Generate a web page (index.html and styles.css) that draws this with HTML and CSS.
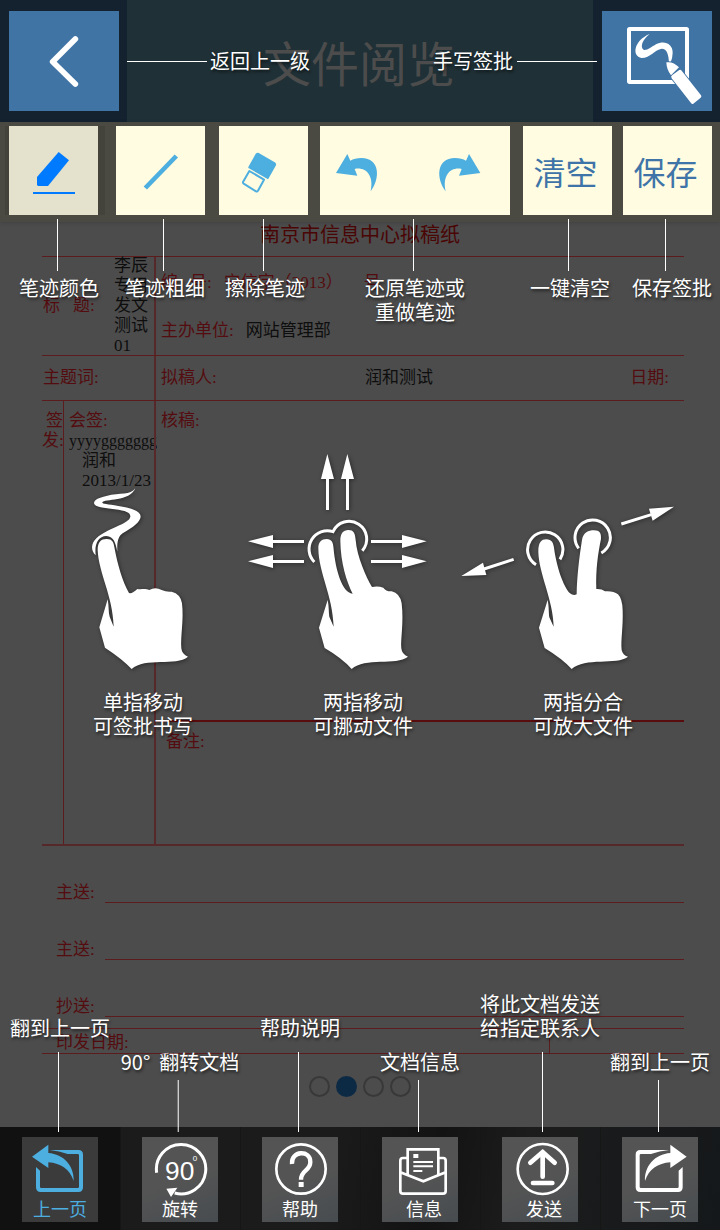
FILE: index.html
```html
<!DOCTYPE html>
<html lang="zh-CN">
<head>
<meta charset="utf-8">
<meta name="viewport" content="width=device-width, initial-scale=1">
<title>文件阅览</title>
<link rel="stylesheet" href="styles.css">
</head>
<body>
<header class="header">
  <div class="header-side">
    <button class="header-button" aria-label="返回上一级">
      <svg viewBox="27 33 330 300"><path d="M226 117L158 185L226 252" fill="none" stroke="#fff" stroke-width="17" stroke-linecap="round" stroke-linejoin="round"/></svg>
    </button>
  </div>
  <div class="header-main">
    <h1 class="header-title">文件阅览</h1>
    <div class="header-tips">
      <div class="header-tip"><span class="lead-h"></span><span class="hint">返回上一级</span></div>
      <div class="header-tip header-tip-end"><span class="hint">手写签批</span><span class="lead-h"></span></div>
    </div>
  </div>
  <div class="header-side">
    <button class="header-button" aria-label="手写签批">
      <svg viewBox="726 33 330 300">
        <rect x="807" y="87" width="174" height="159" rx="2" fill="none" stroke="#fff" stroke-width="12"/>
        <path d="M869 102C849 118 843 134 847 145C853 159 872 142 888 133C914 120 938 132 938 158Q938 174 931 190L927 189C926 164 921 146 905 146C885 149 871 173 845 174C815 170 820 122 869 102Z" fill="#fff"/>
        <path d="M919 187Q940 184 957 202L933 226Q920 210 919 187ZM937 225L958 210Q962 208 965 212L1023 286Q1026 290 1022 293L1000 311Q996 313 993 309L935 235Q931 229 937 225Z" fill="#fff" stroke="#4074a5" stroke-width="5" paint-order="stroke"/>
      </svg>
    </button>
  </div>
</header>

<nav class="toolbar">
  <div class="tool tool-active tool-color">
    <button class="tool-button" aria-label="笔迹颜色"><svg viewBox="27 33 267 267" fill="#007bff"><path d="M176 111L207 136L144 213H114L111 210V186Z"/><path d="M99 231H225V237H99Z"/></svg></button>
    <div class="tool-tip"><span class="hint">笔迹颜色</span></div>
  </div>
  <div class="tool tool-width">
    <button class="tool-button" aria-label="笔迹粗细"><svg viewBox="348 33 267 267"><path d="M436 219L529 123" stroke="#4daee0" stroke-width="14"/></svg></button>
    <div class="tool-tip"><span class="hint">笔迹粗细</span></div>
  </div>
  <div class="tool tool-erase">
    <button class="tool-button" aria-label="擦除笔迹"><svg viewBox="657 33 267 267"><path d="M776 117L824 145Q826 147 825 150L803 189L748 157L769 119Q772 115 776 117Z" fill="#4daee0" stroke="#4daee0" stroke-width="6" stroke-linejoin="round"/><path d="M748 168L729 201Q728 204 731 206L768 229Q772 231 774 227L792 194Z" fill="none" stroke="#4daee0" stroke-width="6" stroke-linejoin="round"/></svg></button>
    <div class="tool-tip"><span class="hint">擦除笔迹</span></div>
  </div>
  <div class="tool tool-history">
    <button class="tool-button" aria-label="还原笔迹"><svg viewBox="960 33 285 267"><path transform="translate(1369 0) scale(-1 1)" d="M327 117L361 174L297 182L305 162C273 155 246 180 257 229C228 190 228 130 285 129Q305 129 318 137Z" fill="#4daee0"/></svg></button>
    <button class="tool-button" aria-label="重做笔迹"><svg viewBox="165 33 285 267"><path d="M327 117L361 174L297 182L305 162C273 155 246 180 257 229C228 190 228 130 285 129Q305 129 318 137Z" fill="#4daee0"/></svg></button>
    <div class="tool-tip"><span class="hint">还原笔迹或<br>重做笔迹</span></div>
  </div>
  <div class="tool tool-clear">
    <button class="tool-button tool-text">清空</button>
    <div class="tool-tip"><span class="hint">一键清空</span></div>
  </div>
  <div class="tool tool-save">
    <button class="tool-button tool-text">保存</button>
    <div class="tool-tip"><span class="hint">保存签批</span></div>
  </div>
</nav>

<main class="viewer">
  <article class="paper">
    <h2 class="paper-title">南京市信息中心拟稿纸</h2>
    <div class="form-row form-subject">
      <div class="cell subject-cell"><span class="subject-label"><span>标</span><span>题:</span></span><span class="ink subject-value">李辰专用发文测试01</span></div>
      <div class="cell number-cell">
        <div class="number-line"><span>编</span><span>号:</span><span>宁信字（2013）</span><span class="number-end">号</span></div>
        <div class="unit-line"><span>主办单位:</span><span class="ink">网站管理部</span></div>
      </div>
    </div>
    <div class="form-row form-author">
      <div class="cell topic-cell">主题词:</div>
      <div class="cell author-cell"><span>拟稿人:</span><span class="ink author-name">润和测试</span><span class="author-date">日期:</span></div>
    </div>
    <div class="form-row form-sign">
      <div class="cell sign-cell"><span class="issue">签<br>发:</span><div class="countersign"><span>会签:</span><span class="ink countersign-id">yyyyggggggg</span><span class="ink countersign-by">润和<br>2013/1/23</span></div></div>
      <div class="cell review-cell"><div class="review">核稿:</div><div class="remark">备注:</div></div>
    </div>
    <div class="send-row"><span>主送:</span><span class="send-line"></span></div>
    <div class="send-row"><span>主送:</span><span class="send-line"></span></div>
    <div class="send-row"><span>抄送:</span><span class="send-line"></span></div>
    <div class="print-row"><span class="print-date">印发日期:</span><span></span></div>
  </article>
  <div class="pages"><span class="page-dot"></span><span class="page-dot page-dot-current"></span><span class="page-dot"></span><span class="page-dot"></span></div>

  <div class="gestures">
    <figure class="gesture">
      <svg class="gesture-art" viewBox="0 0 220 220"><g transform="translate(37 30) scale(.3333)" fill="#fff">
        <path d="M196 25C181 47 151 37 109 48C85 53 72 60 72 70C74 82 103 84 134 88C169 92 182 99 181 110C178 132 110 145 80 174C62 190 62 212 77 226C73 192 84 169 109 168C132 169 137 190 142 215C141 189 143 170 158 160C190 142 212 125 212 109C210 91 181 84 145 78C112 72 97 73 97 67C102 56 180 66 196 25Z"/>
        <path d="M131 440C128 345 86 280 83 210C83 186 93 177 110 177C128 177 131 187 134 206C142 250 157 303 177 339Q187 342 202 327C215 329 225 325 238 330Q256 320 275 330Q290 337 305 335Q332 342 336 370C342 420 331 470 334 505Q336 524 354 530C318 560 225 530 185 567Q157 537 105 503L88 442L113 358C117 380 115 398 119 410Z"/>
      </g></svg>
      <figcaption class="hint">单指移动<br>可签批书写</figcaption>
    </figure>
    <figure class="gesture">
      <svg class="gesture-art" viewBox="0 0 220 220"><g transform="translate(-13 -10) scale(.3333)" fill="#fff">
        <path d="M262 42L282 117H267V210H258V117H243ZM322 42L342 117H327V210H318V117H303Z"/>
        <path d="M24 304L99 285V300H192V309H99V324ZM24 364L99 345V360H192V369H99V384Z"/>
        <path d="M560 304L486 285V300H393V309H486V324ZM560 364L486 345V360H393V369H486V384Z"/>
        <path d="M223 366A55 55 0 0 1 279 275A53 53 0 1 1 367 332" fill="none" stroke="#fff" stroke-width="9"/>
        <path d="M281 560C278 465 236 400 235 325C235 305 245 297 260 297C275 297 280 307 281 328C286 385 306 460 338 461C320 425 302 370 301 302C301 280 310 270 325 270C342 270 345 280 347 300C351 350 378 410 396 441Q415 438 430 443Q438 455 455 454Q480 460 485 490C492 550 481 600 484 625Q486 644 504 650C468 678 375 650 335 687Q307 655 254 624L237 563L263 480C267 500 266 518 268 530Z"/>
      </g></svg>
      <figcaption class="hint">两指移动<br>可挪动文件</figcaption>
    </figure>
    <figure class="gesture">
      <svg class="gesture-art" viewBox="0 0 220 220"><g transform="translate(-33 40) scale(.3333)" fill="#fff">
        <path d="M64 258L129 218L139 255ZM702 50L627 56L638 92Z"/>
        <path d="M132 237L221 208M544 102L634 74M288 224A53 53 0 1 1 360 208M416 175A53 53 0 1 1 484 189" fill="none" stroke="#fff" stroke-width="9"/>
        <path d="M341 410C340 330 296 250 295 185C295 157 304 148 319 148C335 148 341 158 343 180C350 230 370 290 390 310Q400 318 410 313C411 260 418 200 426 150C430 127 445 121 462 121C480 121 484 130 483 147C474 190 467 240 469 297Q485 296 495 304Q520 302 534 313Q547 326 548 360C550 410 542 450 545 480Q548 495 564 500C530 527 435 500 395 537Q368 507 314 474L297 413L323 330C327 350 326 370 328 382Z"/>
      </g></svg>
      <figcaption class="hint">两指分合<br>可放大文件</figcaption>
    </figure>
  </div>
</main>

<footer class="footer">
  <div class="action action-prev">
    <button class="action-button"><svg viewBox="63 471 228 180"><path d="M93 530L142 494V519C188 522 220 558 218 603C206 567 180 550 142 547V564ZM146 510H232V522H200Q175 513 146 510ZM105 561L117 572V620Q117 624 121 624H230Q234 624 234 620V526Q234 522 230 522H210V510H232Q246 510 246 524V622Q246 636 232 636H119Q105 636 105 622Z" fill="#4daee0"/></svg><span>上一页</span></button>
    <div class="action-tip action-tip-tall"><span class="hint">翻到上一页</span></div>
  </div>
  <div class="action">
    <button class="action-button"><svg viewBox="426 471 228 180"><path d="M470 578A74 74 0 1 1 524 639" fill="none" stroke="#fff" stroke-width="9"/><path d="M499 626L532 623L513 651Z" fill="#fff"/><text class="rotate-number" x="495" y="599">90</text><text class="rotate-degree" x="578" y="543">0</text></svg><span>旋转</span></button>
    <div class="action-tip"><span class="hint">90°&nbsp; 翻转文档</span></div>
  </div>
  <div class="action">
    <button class="action-button"><svg viewBox="783 471 228 180"><circle cx="900" cy="567" r="74" fill="none" stroke="#fff" stroke-width="8"/><path d="M873 552C869 511 929 509 928 546C928 574 900 568 900 599" fill="none" stroke="#fff" stroke-width="13"/><path d="M893 606H908V621H893Z" fill="#fff"/></svg><span>帮助</span></button>
    <div class="action-tip action-tip-tall"><span class="hint">帮助说明</span></div>
  </div>
  <div class="action action-wide-icon">
    <button class="action-button"><svg viewBox="66 471 228 180"><path d="M139 534H129Q121 534 121 542V633Q121 641 129 641H249Q257 641 257 633V542Q257 534 249 534H238M121 577L190 604L257 577M143 583V508H235V583" fill="none" stroke="#fff" stroke-width="8"/><path d="M160 522H175V534H160ZM160 543H219V549H160ZM160 556H219V562H160ZM160 570H187V576H160Z" fill="#fff"/></svg><span>信息</span></button>
    <div class="action-tip"><span class="hint">文档信息</span></div>
  </div>
  <div class="action action-wide-icon action-send">
    <button class="action-button"><svg viewBox="429 471 228 180"><circle cx="551" cy="567" r="75" fill="none" stroke="#fff" stroke-width="8"/><path d="M551 590V516M514 548L551 516L587 548M522 609H580" fill="none" stroke="#fff" stroke-width="14" stroke-linecap="round"/></svg><span>发送</span></button>
    <div class="action-tip action-tip-tall"><span class="hint">将此文档发送<br>给指定联系人</span></div>
  </div>
  <div class="action">
    <button class="action-button"><svg viewBox="786 471 228 180"><path transform="translate(1073 0) scale(-1 1)" d="M93 530L142 494V519C188 522 220 558 218 603C206 567 180 550 142 547V564ZM146 510H232V522H200Q175 513 146 510ZM105 561L117 572V620Q117 624 121 624H230Q234 624 234 620V526Q234 522 230 522H210V510H232Q246 510 246 524V622Q246 636 232 636H119Q105 636 105 622Z" fill="#fff"/></svg><span>下一页</span></button>
    <div class="action-tip"><span class="hint">翻到上一页</span></div>
  </div>
</footer>
</body>
</html>
```

FILE: styles.css
```css
* {
  box-sizing: border-box;
}

body {
  margin: 0;
  min-height: 100vh;
  display: flex;
  flex-direction: column;
  background: #4c4c4c;
  color: #fff;
  font-family: "Noto Sans CJK SC", sans-serif;
}

button {
  display: block;
  margin: 0;
  padding: 0;
  border: 0;
  font-family: inherit;
  cursor: pointer;
}

svg {
  display: block;
}

.hint {
  display: block;
  color: #fff;
  font-size: 20px;
  line-height: 24px;
  text-align: center;
  white-space: nowrap;
  text-shadow: 1px 2px 3px rgba(0, 0, 0, 0.6);
}

/* Header */

.header {
  display: grid;
  grid-template-columns: 127px 1fr 127px;
  height: 122px;
  background: #142230;
}

.header-side {
  padding: 11px 9px 0;
}

.header-button {
  width: 110px;
  height: 100px;
  background: #4074a5;
}

.header-main {
  position: relative;
  display: flex;
  align-items: center;
  justify-content: center;
  background: #1f3036;
}

.header-title {
  margin: 0;
  padding-right: 2px;
  color: #4c4c4c;
  font-size: 48px;
  line-height: 72px;
  font-weight: 400;
}

.header-tips {
  position: absolute;
  inset: 0 -4px 0 0;
  display: flex;
  align-items: center;
  justify-content: space-between;
}

.header-tip {
  display: flex;
  align-items: center;
  gap: 3px;
}

.header-tip-end {
  gap: 4px;
}

.lead-h {
  width: 80px;
  height: 1px;
  background: #fff;
}

/* Toolbar */

.toolbar {
  position: relative;
  z-index: 1;
  display: grid;
  grid-template-columns: 107fr 103fr 101fr 203fr 100fr 89fr;
  padding: 4px 8px 7px 9px;
  background: #4b4a42;
  box-shadow: 0 1px 4px rgba(0, 0, 0, 0.15);
}

.tool {
  position: relative;
  display: flex;
  justify-self: start;
  width: 89px;
  height: 89px;
  background: #fffce1;
}

.tool-button {
  flex: 1;
  min-width: 0;
  background: transparent;
  color: #3e74a8;
  font-size: 32px;
}

.tool-text {
  padding-right: 4px;
}

.tool-active {
  background: #e4e1cc;
  box-shadow: -4px 0 0 #43423b, 7px 0 0 #43423b;
}

.tool-history {
  width: 190px;
}

.tool-tip::before {
  content: "";
  position: absolute;
  top: 93px;
  left: var(--lead);
  width: 1px;
  height: 52px;
  background: #fff;
}

.tool-tip .hint {
  position: absolute;
  top: 150px;
  left: var(--label);
  transform: translateX(-50%);
}

.tool-color { --lead: 48px; --label: 50px; }
.tool-width { --lead: 47px; --label: 49px; }
.tool-erase { --lead: 44px; --label: 46px; }
.tool-history { --lead: 93px; --label: 95px; }
.tool-clear { --lead: 45px; --label: 47px; }
.tool-save { --lead: 42px; --label: 49px; }

/* Document */

.viewer {
  position: relative;
  flex: 1;
}

.paper {
  margin: 0 36px 0 42px;
  color: #540c10;
  font-family: "Liberation Serif", "Noto Sans CJK SC", serif;
  font-size: 17px;
  line-height: 20px;
}

.ink {
  color: #0e0e0e;
}

.paper-title {
  margin: 0 0 10px;
  padding-right: 6px;
  color: #4a0505;
  font-family: "Noto Sans CJK SC", sans-serif;
  font-size: 20px;
  line-height: 24px;
  font-weight: 400;
  text-align: center;
}

.form-row {
  display: grid;
  grid-template-columns: 112px 1fr;
  border-top: 1px solid #5c1c1e;
}

.cell + .cell {
  border-left: 2px solid #56282a;
  padding-left: 5px;
}

.form-subject {
  min-height: 99px;
}

.subject-cell {
  display: flex;
  align-items: center;
  justify-content: space-between;
  padding-left: 1px;
}

.subject-label {
  display: flex;
  gap: 13px;
}

.subject-value {
  width: 40px;
  word-break: break-all;
  line-height: 20px;
  margin: -1px 0;
}

.number-cell {
  display: flex;
  flex-direction: column;
  gap: 28px;
  padding-top: 16px;
}

.number-line,
.unit-line {
  display: flex;
  gap: 12px;
}

.number-end {
  margin-left: 9px;
}

.form-author {
  min-height: 45px;
  line-height: 44px;
}

.topic-cell {
  padding-left: 1px;
}

.author-cell {
  display: grid;
  grid-template-columns: 204px 1fr auto;
  padding-right: 15px;
}

.form-sign {
  min-height: 446px;
  border-bottom: 2px solid #56282a;
}

.sign-cell {
  display: grid;
  grid-template-columns: 22px 1fr;
}

.issue {
  padding-top: 10px;
  text-align: right;
  border-right: 1px solid #5c1c1e;
}

.countersign {
  display: flex;
  flex-direction: column;
  padding: 10px 0 0 5px;
}

.countersign-id {
  font-size: 16px;
}

.countersign-by {
  padding-left: 13px;
}

.form-sign .review-cell {
  display: grid;
  grid-template-rows: 319px 1fr;
  padding-left: 0;
}

.review {
  padding: 10px 0 0 5px;
}

.remark {
  padding: 10px 0 0 10px;
  border-top: 2px solid #590c0e;
}

.send-row {
  display: grid;
  grid-template-columns: 49px 1fr;
  align-items: end;
  height: 57px;
  padding-left: 14px;
}

.send-line {
  border-bottom: 1px solid #5c1c1e;
}

.print-row {
  display: grid;
  grid-template-columns: 508px 1fr;
  margin-top: 11px;
  border: 1px solid #5c1c1e;
  border-width: 1px 0;
}

.print-date {
  padding: 4px 0 0 14px;
  border-right: 1px solid #5c1c1e;
}

.pages {
  display: flex;
  justify-content: center;
  gap: 6px;
  margin: 22px 0 30px;
}

.page-dot {
  width: 21px;
  height: 21px;
  border: 2px solid #383838;
  border-radius: 50%;
}

.page-dot-current {
  border-color: #0d2a45;
  background: #0d2a45;
}

/* Gesture guide lying over the document */

.gestures {
  position: absolute;
  top: 228px;
  left: 33px;
  right: 27px;
  display: grid;
  grid-template-columns: repeat(3, 1fr);
}

.gesture {
  display: flex;
  flex-direction: column;
  align-items: center;
  gap: 20px;
  margin: 0;
}

.gesture-art {
  width: 220px;
  height: 220px;
  overflow: visible;
  filter: drop-shadow(1px 1px 2px rgba(0, 0, 0, 0.45));
}

/* Footer */

.footer {
  display: grid;
  grid-template-columns: repeat(6, 1fr);
  height: 103px;
  background: linear-gradient(100deg, #1b1b1b 45%, #131313 60%, #1c1c1c 72%, #15181a);
}

.action {
  display: flex;
  justify-content: center;
  align-items: flex-start;
  padding-top: 10px;
  position: relative;
}

.action + .action {
  box-shadow: inset 1px 0 0 #161616;
}

.action-prev {
  background: #111;
}

.action-button {
  display: flex;
  flex-direction: column;
  align-items: center;
  justify-content: flex-start;
  width: 76px;
  height: 85px;
  background: linear-gradient(160deg, #545454 50%, #474c50);
  color: #fff;
  font-size: 18px;
  line-height: 22px;
}

.action-button svg {
  width: 76px;
  height: 60px;
}

.action-wide-icon .action-button span {
  padding-left: 8px;
}

.action-prev .action-button {
  background: #3b3b3b;
  color: #4daee0;
}

.rotate-number {
  fill: #fff;
  font-family: "Liberation Sans", sans-serif;
  font-size: 79px;
}

.rotate-degree {
  fill: #fff;
  font-family: "Liberation Sans", sans-serif;
  font-size: 24px;
}

.action-tip {
  position: absolute;
  bottom: 98px;
  left: 50%;
  padding-bottom: 58px;
  transform: translateX(-50%);
}

.action-tip-tall {
  padding-bottom: 92px;
}

.action-tip::after {
  content: "";
  position: absolute;
  bottom: 0;
  left: calc(50% - 2px);
  width: 1px;
  height: 52px;
  background: #fff;
}

.action-tip-tall::after {
  height: 80px;
}

.action-send .action-tip::after {
  left: calc(50% + 2px);
}
```
